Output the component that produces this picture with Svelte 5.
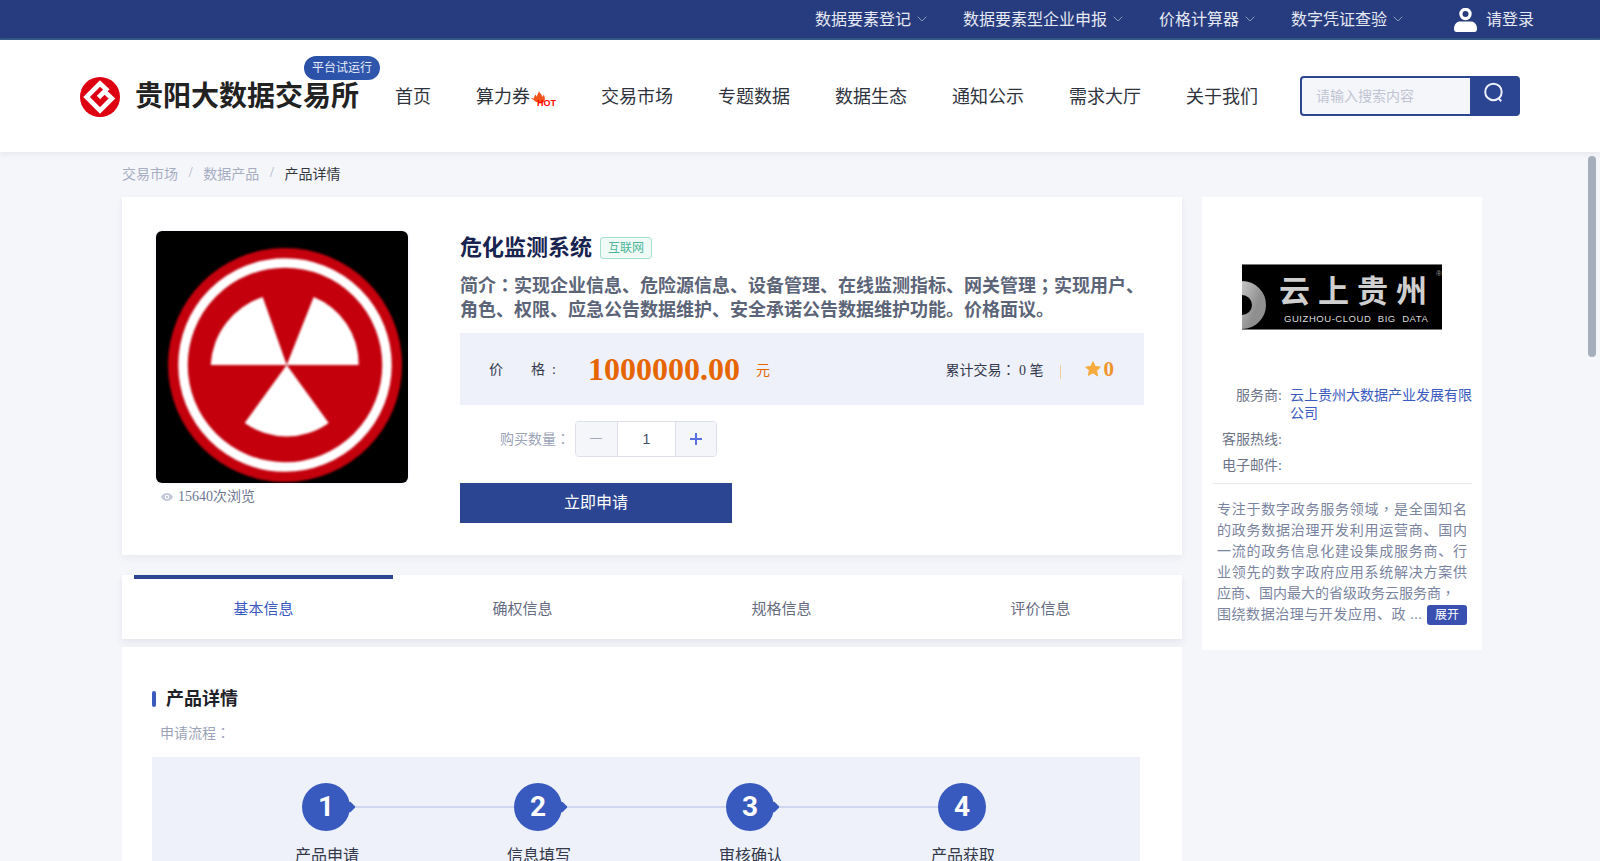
<script lang="ts">
  const topLinks = ['数据要素登记', '数据要素型企业申报', '价格计算器', '数字凭证查验'];
  const navItems = ['首页', '算力券', '交易市场', '专题数据', '数据生态', '通知公示', '需求大厅', '关于我们'];
  const tabs = ['基本信息', '确权信息', '规格信息', '评价信息'];
  const steps = ['产品申请', '信息填写', '审核确认', '产品获取'];

  let activeTab = $state(0);
  let quantity = $state(1);

  function changeQuantity(delta: number) {
    quantity = Math.max(1, quantity + delta);
  }
</script>

<div class="page">
  <div class="topbar">
    {#each topLinks as link}
      <a class="top-link" href="#top">
        {link}
        <svg class="chevron" viewBox="0 0 10 6" width="10" height="6"><path d="M.7.7 5 5 9.3.7" fill="none" stroke="currentColor" stroke-width="1" /></svg>
      </a>
    {/each}
    <a class="login" href="#login">
      <svg viewBox="0 0 23 24" width="23" height="24">
        <circle cx="11.5" cy="6" r="4.6" fill="none" stroke="#fff" stroke-width="3.2" />
        <path d="M0 21c0-5 3-7.500 6-7.500h11c3 0 6 2.500 6 7.500 0 2-1 3-2.500 3h-18C1 24 0 23 0 21z" fill="#fff" />
      </svg>
      请登录
    </a>
  </div>

  <header class="header">
    <div class="brand">
      <svg class="brand-logo" viewBox="0 0 40 40" width="40" height="40">
        <circle cx="20" cy="20" r="20" fill="#dc0012" />
        <path d="M28 14 20 6.500 6.500 20 20 33.500 32 21.500 24.500 14.500 18.500 20.500" fill="none" stroke="#fff" stroke-width="4.600" />
      </svg>
      <span class="brand-name">贵阳大数据交易所</span>
      <span class="trial">平台试运行</span>
    </div>
    <nav class="nav">
      {#each navItems as item}
        <a href="#nav" class="nav-item">
          {item}
          {#if item === '算力券'}
            <span class="hot">
              <svg viewBox="0 0 16 15" width="16" height="15">
                <path d="M9 0c1 3 3 3 3.500 6 .5-.5 1-1.500 1-2.500C15 5.500 15.500 8 14 11H6L1 7c1.500 0 2.500.3 3 1 0-2 .5-3.500 2-4.500 0 1 .3 1.800 1 2.200C7 4 8.500 2 9 0z" fill="#f2541b" />
              </svg>
              <b>HOT</b>
            </span>
          {/if}
        </a>
      {/each}
    </nav>
    <div class="search">
      <input placeholder="请输入搜索内容" />
      <button aria-label="搜索">
        <svg viewBox="0 0 20 20" width="22" height="22">
          <circle cx="9.500" cy="9" r="7.500" fill="none" stroke="#eef1fa" stroke-width="1.800" />
          <path d="M14 14.500l2.500 3" stroke="#eef1fa" stroke-width="1.800" fill="none" />
        </svg>
      </button>
    </div>
  </header>

  <div class="crumbs">
    <span>交易市场</span><i>/</i><span>数据产品</span><i>/</i><span class="here">产品详情</span>
  </div>

  <main class="main">
    <div class="left">
      <section class="product">
        <div class="cover-col">
          <div class="cover">
            <svg viewBox="0 0 252 252" width="252" height="252">
              <rect width="252" height="252" fill="#000" />
              <g class="emblem">
                <circle cx="129" cy="134" r="117" fill="#c4000c" />
                <circle cx="129" cy="134" r="102" fill="none" stroke="#fff" stroke-width="9.500" />
                <g transform="translate(130.700 134)" fill="#fff">
                  <path d="M0 0H-76A76 76 0 0 1-24-68Z" />
                  <path d="M0 0H72A72 72 0 0 0 27-68Z" />
                  <path d="M0 0-42 58A72 72 0 0 0 42 58Z" />
                </g>
              </g>
            </svg>
          </div>
          <div class="views">
            <svg viewBox="0 0 12 8" width="12" height="8">
              <path d="M0 4c1.500-2.600 3.600-4 6-4s4.500 1.400 6 4c-1.500 2.600-3.600 4-6 4S1.500 6.600 0 4z" fill="#c3c9d8" />
              <circle cx="6" cy="4" r="2.200" fill="#fff" />
              <circle cx="6" cy="4" r="1.200" fill="#c3c9d8" />
            </svg>
            15640次浏览
          </div>
        </div>
        <div class="info">
          <div class="title-row">
            <h1>危化监测系统</h1>
            <span class="tag">互联网</span>
          </div>
          <p class="intro">简介<span class="pc">：</span>实现企业信息、危险源信息、设备管理、在线监测指标、网关管理<span class="pc">；</span>实现用户、角色、权限、应急公告数据维护、安全承诺公告数据维护功能。价格面议。</p>
          <div class="price-box">
            <span class="price-label">价&emsp;&emsp;格&nbsp;&nbsp;:</span>
            <span class="price">1000000.00</span>
            <span class="unit">元</span>
            <span class="deals">累计交易<span class="pc">：</span> 0 笔</span>
            <span class="sep"></span>
            <svg class="star" viewBox="0 0 24 24" width="16" height="16"><path d="M12 1l3.400 7.200 7.600 1-5.600 5.400 1.500 7.900L12 17.700l-6.900 3.800 1.500-7.900L1 9.200l7.600-1z" fill="#f6ab3c" stroke="#f6ab3c" stroke-width="1.500" stroke-linejoin="round" /></svg>
            <b class="score">0</b>
          </div>
          <div class="qty-row">
            <span class="qty-label">购买数量<span class="pc">：</span></span>
            <div class="stepper">
              <button class="minus" aria-label="减少" onclick={() => changeQuantity(-1)}></button>
              <input bind:value={quantity} />
              <button class="plus" aria-label="增加" onclick={() => changeQuantity(1)}></button>
            </div>
          </div>
          <button class="apply">立即申请</button>
        </div>
      </section>

      <div class="tabs">
        {#each tabs as tab, i}
          <button class="tab" class:active={activeTab === i} onclick={() => (activeTab = i)}>{tab}</button>
        {/each}
      </div>

      <section class="details">
        <h2>产品详情</h2>
        <div class="flow-label">申请流程<span class="pc">：</span></div>
        <div class="flow">
          {#each steps as step, i}
            <div class="step">
              <div class="num" class:last={i === steps.length - 1}>{i + 1}</div>
              <div class="step-name">{step}</div>
            </div>
          {/each}
        </div>
      </section>
    </div>

    <aside class="vendor">
      <div class="vendor-logo">
        <svg class="swirl" viewBox="0 0 24 66" width="24" height="66">
          <defs>
            <linearGradient id="swirl-fill" x1="0" y1="0" x2="1" y2="0.400">
              <stop offset="0" stop-color="#e4e4e4" />
              <stop offset="1" stop-color="#8f8f8f" />
            </linearGradient>
          </defs>
          <circle cx="0" cy="41" r="17" fill="none" stroke="url(#swirl-fill)" stroke-width="14" />
        </svg>
        <span class="cloud-cn">云上贵州</span>
        <span class="cloud-en">GUIZHOU-CLOUD&nbsp; BIG&nbsp; DATA</span>
        <span class="cloud-r">®</span>
      </div>
      <dl class="facts">
        <dt>服务商:</dt>
        <dd class="link">云上贵州大数据产业发展有限公司</dd>
        <dt>客服热线:</dt>
        <dd></dd>
        <dt>电子邮件:</dt>
        <dd></dd>
      </dl>
      <div class="about">
        <p>专注于数字政务服务领域<span class="pc">，</span>是全国知名的政务数据治理开发利用运营商、国内一流的政务信息化建设集成服务商、行业领先的数字政府应用系统解决方案供应商、国内最大的省级政务云服务商<span class="pc">，</span></p>
        <div class="about-last">
          <span>围绕数据治理与开发应用、政 ...</span>
          <button class="more">展开</button>
        </div>
      </div>
    </aside>
  </main>

  <div class="scrollbar"></div>
</div>

<style>
  :global(body) {
    margin: 0;
    background: #f5f6fa;
    font-family: "Liberation Serif", "Noto Sans CJK SC", serif;
    overflow: hidden;
  }

  a {
    color: inherit;
    text-decoration: none;
  }

  button {
    font-family: inherit;
    border: none;
    cursor: pointer;
  }

  /* centred full-width punctuation, as the TC cut draws it */
  .pc {
    font-family: "Noto Sans CJK TC", sans-serif;
    line-height: 0;
  }

  .page {
    position: relative;
    height: 861px;
    overflow: hidden;
  }

  .topbar {
    height: 39px;
    box-sizing: border-box;
    background: #263c7e;
    border-bottom: 1px solid #2b5b78;
    margin-bottom: 1px;
    box-shadow: 0 1px 0 #3d5a93;
    display: flex;
    justify-content: flex-end;
    align-items: center;
    padding: 0 66px 2px 0;
    color: #e6e9f3;
    font-size: 16px;
  }

  .top-link {
    display: flex;
    align-items: center;
    margin-right: 36px;
  }

  .chevron {
    margin-left: 6px;
    color: #8f9bbd;
    margin-top: 2px;
  }

  .login {
    display: flex;
    align-items: center;
    gap: 9px;
    margin-left: 15px;
  }

  .login svg {
    margin-top: 3px;
  }

  .header {
    height: 112px;
    box-sizing: border-box;
    background: #fff;
    box-shadow: 0 2px 6px rgba(30, 40, 80, 0.07);
    display: flex;
    align-items: center;
    padding: 2px 0 0 80px;
    position: relative;
  }

  .brand {
    display: flex;
    align-items: center;
    gap: 15px;
    position: relative;
  }

  .brand-name {
    font-size: 28px;
    font-weight: 700;
    color: #222;
    line-height: 40px;
    white-space: nowrap;
  }

  .trial {
    position: absolute;
    left: 224px;
    top: -21px;
    width: 76px;
    height: 24px;
    border-radius: 12px;
    background: linear-gradient(90deg, #2a50a8, #2f58ad);
    color: #e8edf8;
    font-size: 12px;
    line-height: 24px;
    text-align: center;
  }

  .nav {
    display: flex;
    gap: 45px;
    margin-left: 36px;
    font-size: 18px;
    color: #2f333d;
  }

  .nav-item {
    display: flex;
    align-items: center;
    white-space: nowrap;
    line-height: 26px;
  }

  .hot {
    display: block;
    position: relative;
    width: 26px;
    height: 26px;
  }

  .hot svg {
    position: absolute;
    left: 0;
    top: 7px;
  }

  .hot b {
    position: absolute;
    left: 7px;
    top: 14px;
    font: 900 9px/10px "Liberation Sans", sans-serif;
    color: #f00;
  }

  .search {
    margin: -2px 0 0 42px;
    width: 220px;
    height: 40px;
    box-sizing: border-box;
    border: 2px solid #2b4593;
    border-radius: 4px;
    display: flex;
    overflow: hidden;
    background: #2b4593;
  }

  .search input {
    width: 168px;
    border: none;
    outline: none;
    background: #f5f6fa;
    padding: 0 0 2px 14px;
    box-sizing: border-box;
    font: 14px "Noto Sans CJK SC", sans-serif;
  }

  .search input::placeholder {
    color: #c0c4d2;
  }

  .search button {
    flex: 1;
    background: #2b4593;
    padding: 0 0 2px;
  }

  .crumbs {
    height: 45px;
    display: flex;
    align-items: center;
    padding: 0 0 4px 122px;
    box-sizing: border-box;
    font-size: 14px;
    color: #a6adc3;
  }

  .crumbs i {
    font-style: normal;
    margin: 0 10.7px;
  }

  .here {
    color: #33363f;
  }

  .main {
    display: flex;
    gap: 20px;
    padding-left: 122px;
    align-items: flex-start;
  }

  .left {
    width: 1060px;
  }

  .product {
    height: 358px;
    box-sizing: border-box;
    background: #fff;
    box-shadow: 0 3px 8px rgba(30, 40, 80, 0.06);
    padding: 34px 0 0 34px;
    display: flex;
  }

  .cover-col {
    width: 304px;
    flex: none;
  }

  .cover {
    width: 252px;
    height: 252px;
    border-radius: 6px;
    overflow: hidden;
    box-shadow: 0 0 0 2px #fafafe;
  }

  .cover svg {
    display: block;
  }

  .emblem {
    filter: blur(0.8px);
  }

  .views {
    display: flex;
    align-items: center;
    gap: 5px;
    margin: 5px 0 0 5px;
    font-size: 14px;
    line-height: 18px;
    color: #6f7790;
  }

  .info {
    width: 684px;
  }

  .title-row {
    display: flex;
    align-items: center;
    height: 32px;
  }

  h1 {
    margin: 0;
    padding-bottom: 4px;
    font-size: 22px;
    font-weight: 700;
    color: #18234f;
  }

  .tag {
    margin: 2px 0 0 8px;
    width: 52px;
    height: 22px;
    box-sizing: border-box;
    border: 1px solid #a5e0cf;
    border-radius: 3px;
    background: #f0faf7;
    color: #4cb598;
    font-size: 12px;
    line-height: 20px;
    text-align: center;
  }

  .intro {
    margin: 11px 0 0;
    font-size: 18px;
    font-weight: 700;
    line-height: 24px;
    color: #5c6478;
  }

  .price-box {
    margin-top: 11px;
    height: 72px;
    background: #eef1fa;
    display: flex;
    align-items: center;
    padding: 0 30px 0 29px;
    font-size: 14px;
    color: #33384a;
  }

  .price-label {
    width: 99px;
    flex: none;
    padding-bottom: 2px;
    white-space: nowrap;
  }

  .price {
    font-size: 32px;
    font-weight: 700;
    color: #e56500;
    width: 168px;
    flex: none;
  }

  .unit {
    color: #e56500;
  }

  .deals {
    margin-left: auto;
  }

  .sep {
    width: 1px;
    height: 14px;
    margin: 6px 24px 0 16px;
    background: #f3cf95;
  }

  .star {
    margin-right: 3px;
  }

  .score {
    font-size: 21px;
    color: #f0942a;
  }

  .qty-row {
    margin-top: 16px;
    display: flex;
    align-items: center;
    padding-left: 40px;
    font-size: 14px;
  }

  .qty-label {
    width: 75px;
    padding-bottom: 2px;
    color: #9ba3b8;
    white-space: nowrap;
  }

  .stepper {
    width: 142px;
    height: 36px;
    box-sizing: border-box;
    border: 1px solid #dde0ea;
    border-radius: 4px;
    display: flex;
    overflow: hidden;
  }

  .stepper button {
    width: 41px;
    flex: none;
    background: #f5f6fa;
    position: relative;
  }

  .stepper .plus {
    width: 40px;
  }

  .stepper input {
    flex: 1;
    min-width: 0;
    border: none;
    border-left: 1px solid #dde0ea;
    border-right: 1px solid #dde0ea;
    outline: none;
    text-align: center;
    font: 14px "Liberation Sans", sans-serif;
    color: #4a5068;
    padding: 0;
  }

  .minus::before,
  .plus::before,
  .plus::after {
    content: '';
    position: absolute;
    left: 14px;
    top: 16px;
    width: 12px;
    height: 1px;
    background: #a3a9b8;
  }

  .plus::before {
    height: 1.5px;
    background: #5a6fe0;
  }

  .plus::after {
    background: #5a6fe0;
    left: 19.25px;
    top: 11px;
    width: 1.5px;
    height: 12px;
  }

  .apply {
    display: block;
    margin-top: 26px;
    width: 272px;
    height: 40px;
    padding: 0 0 4px;
    background: #2b4593;
    color: #fff;
    font-size: 16px;
  }

  .tabs {
    margin-top: 20px;
    height: 64px;
    background: #fff;
    box-shadow: 0 4px 8px rgba(30, 40, 80, 0.07);
    padding: 0 12px;
    display: flex;
  }

  .tab {
    flex: 1;
    background: none;
    border-top: 4px solid transparent;
    padding: 0 0 4px;
    font-size: 15px;
    color: #666c80;
  }

  .tab.active {
    border-top-color: #2b4593;
    color: #3a5abe;
  }

  .details {
    margin-top: 8px;
    background: #fff;
    padding: 41px 30px 40px;
    height: 400px;
    box-sizing: border-box;
  }

  h2 {
    margin: 0;
    font-size: 18px;
    font-weight: 700;
    line-height: 22px;
    color: #1f2128;
    padding-left: 14px;
    position: relative;
  }

  h2::before {
    content: '';
    position: absolute;
    left: 0;
    top: 3px;
    width: 4px;
    height: 16px;
    border-radius: 2px;
    background: #3a5abe;
  }

  .flow-label {
    margin: 14px 0 0 8px;
    font-size: 14px;
    line-height: 20px;
    color: #9ba3b8;
  }

  .flow {
    margin-top: 13px;
    width: 988px;
    height: 200px;
    background: #eef1fa;
    padding: 26px 0 0 68px;
    box-sizing: border-box;
    display: flex;
  }

  .step {
    width: 212px;
    text-align: center;
    flex: none;
  }

  .num {
    width: 48px;
    height: 48px;
    margin: 0 auto;
    border-radius: 50%;
    background: #3859bd;
    color: #fff;
    font: 700 28px/48px Roboto, sans-serif;
    position: relative;
  }

  .num:not(.last)::before {
    content: '';
    position: absolute;
    left: 50px;
    top: 23px;
    width: 164px;
    height: 2px;
    background: #ced6f0;
  }

  .num:not(.last)::after {
    content: '';
    position: absolute;
    left: 44px;
    top: 20px;
    width: 8px;
    height: 8px;
    background: #3859bd;
    transform: rotate(45deg);
    border-radius: 1px;
  }

  .step-name {
    margin-top: 13px;
    padding-left: 2px;
    font-size: 16px;
    line-height: 24px;
    color: #33384a;
  }

  .vendor {
    width: 280px;
    height: 453px;
    box-sizing: border-box;
    background: #fff;
    padding-top: 67px;
  }

  .vendor-logo {
    width: 200px;
    height: 66px;
    margin-left: 40px;
    background: #000;
    border-top: 1px solid #777;
    border-bottom: 1px solid #777;
    box-sizing: border-box;
    position: relative;
    overflow: hidden;
    color: #fff;
  }

  .swirl {
    position: absolute;
    left: 0;
    top: -1px;
  }

  .cloud-cn {
    position: absolute;
    left: 37px;
    top: 3px;
    font: 700 31px/42px "Noto Sans CJK SC", sans-serif;
    letter-spacing: 8px;
    white-space: nowrap;
    color: #cfcfcf;
  }

  .cloud-en {
    position: absolute;
    left: 42px;
    top: 48px;
    font: 9.5px/12px "Liberation Sans", sans-serif;
    letter-spacing: 0.55px;
    white-space: nowrap;
    color: #ddd;
  }

  .cloud-r {
    position: absolute;
    right: 0;
    top: 4px;
    font: 8px/10px "Liberation Sans", sans-serif;
    color: #999;
  }

  .facts {
    margin: 57px 10px 0 0;
    display: grid;
    grid-template-columns: 80px 1fr;
    column-gap: 8px;
    row-gap: 8px;
    font-size: 14px;
    line-height: 18px;
    color: #6c7488;
    padding: 0 0 8px;
  }

  dt {
    text-align: right;
  }

  dd {
    margin: 0;
  }

  .link {
    color: #3a5abe;
  }

  .about {
    margin: 0 10px;
    border-top: 1px solid #e8eaf0;
    padding: 15px 5px 0;
    font-size: 14px;
    line-height: 21px;
    color: #7a84a0;
  }

  .about p {
    margin: 0;
    text-align: justify;
  }

  .about-last {
    display: flex;
    justify-content: space-between;
    align-items: center;
    white-space: nowrap;
    letter-spacing: 0.55px;
  }

  .more {
    width: 40px;
    height: 20px;
    padding: 0;
    border-radius: 3px;
    background: #3a50b0;
    color: #fff;
    font-size: 12px;
    line-height: 20px;
    letter-spacing: 0;
  }

  .scrollbar {
    position: absolute;
    left: 1588px;
    top: 156px;
    width: 8px;
    height: 201px;
    border-radius: 4px;
    background: #a5aebb;
  }
</style>
